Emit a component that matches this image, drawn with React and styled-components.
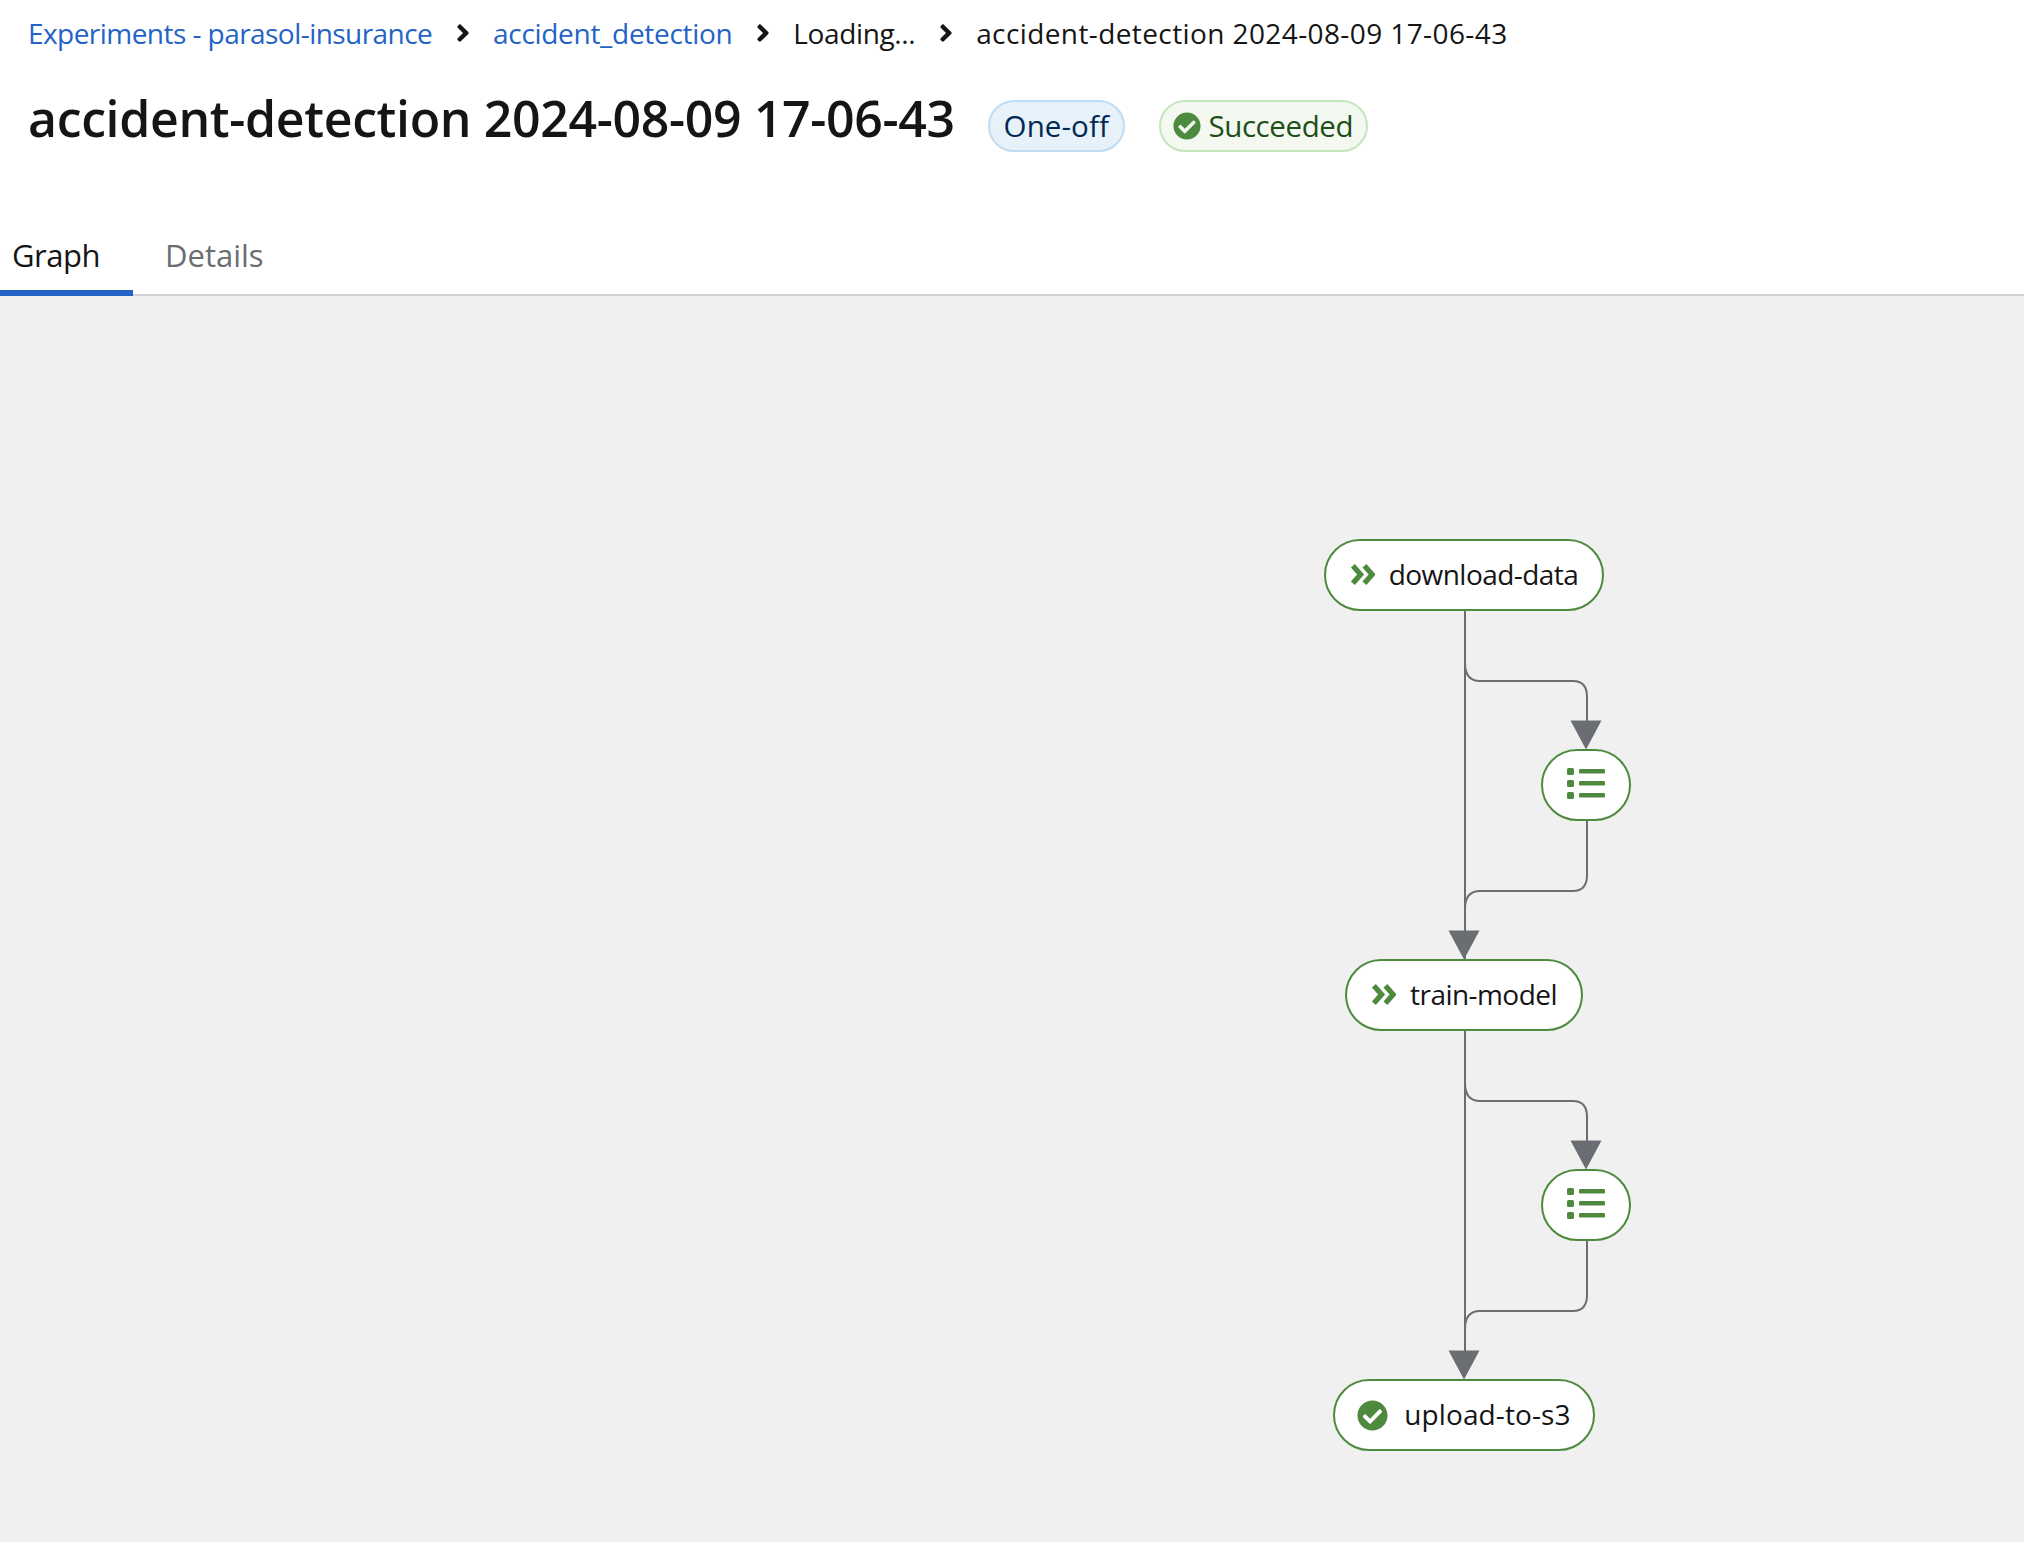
import React from 'react'
import styled, { createGlobalStyle } from 'styled-components'
import { FaCheckCircle, FaAngleRight } from 'react-icons/fa'

const runTitle = 'accident-detection 2024-08-09 17-06-43'

const GlobalStyle = createGlobalStyle`
  html, body {
    margin: 0;
    padding: 0;
    background: #fff;
  }
  body {
    font-family: "Open Sans", "Liberation Sans", sans-serif;
    color: #151515;
    overflow: hidden;
  }
`

const Page = styled.div`
  width: 2024px;
  height: 1542px;
  display: flex;
  flex-direction: column;
`

const Header = styled.header`
  padding: 13px 28px 0;
  height: 214px;
  box-sizing: border-box;
`

const Breadcrumbs = styled.nav`
  display: flex;
  align-items: center;
  height: 40px;
  font-size: 28px;
`

const Crumb = styled.a`
  color: ${(p) => (p.$link ? '#2463c6' : '#151515')};
  letter-spacing: ${(p) => p.$tracking}px;
  white-space: nowrap;
`

const Chevron = styled(FaAngleRight)`
  width: 14px;
  height: 28px;
  margin: 0 23.4px;
  color: #151515;
`

const TitleRow = styled.div`
  display: flex;
  align-items: center;
  margin-top: 33px;
  height: 64px;
`

const Title = styled.h1`
  margin: 0 33px 0 0;
  font-size: 50px;
  font-weight: 600;
  letter-spacing: -0.35px;
  white-space: nowrap;
  color: #151515;
`

const Badge = styled.span`
  display: inline-flex;
  align-items: center;
  justify-content: center;
  gap: 7px;
  box-sizing: border-box;
  height: 52px;
  width: ${(p) => p.$width}px;
  margin-right: 34px;
  margin-top: 16px;
  padding-bottom: 1px;
  border-radius: 26px;
  font-size: 29.5px;
  font-weight: 500;
  letter-spacing: ${(p) => p.$tracking}px;
  white-space: nowrap;
  border: 2px solid ${(p) => (p.$tone === 'green' ? '#c3e6bc' : '#bfdcf2')};
  background: ${(p) => (p.$tone === 'green' ? '#f3f9f1' : '#e7f1fa')};
  color: ${(p) => (p.$tone === 'green' ? '#1e4f18' : '#002952')};
`

const BadgeIcon = styled(FaCheckCircle)`
  width: 28px;
  height: 28px;
  color: #4e8a3d;
`

const Tabs = styled.div`
  display: flex;
  height: 82px;
  box-sizing: border-box;
  border-bottom: 2px solid #d2d2d2;
`

const Tab = styled.div`
  box-sizing: border-box;
  height: 82px;
  width: ${(p) => p.$width}px;
  padding: 6px 0 0 ${(p) => p.$pad}px;
  display: flex;
  align-items: center;
  font-size: 31px;
  letter-spacing: ${(p) => p.$tracking}px;
  color: ${(p) => (p.$active ? '#151515' : '#6a6e73')};
  border-bottom: 6px solid ${(p) => (p.$active ? '#2463c6' : 'transparent')};
`

const Canvas = styled.main`
  position: relative;
  flex: 1;
  background: #f0f0f0;
  overflow: hidden;
`

const Edges = styled.svg`
  position: absolute;
  left: 0;
  top: 0;
  width: 2024px;
  height: 1246px;
`

const Node = styled.div`
  position: absolute;
  left: ${(p) => p.$x}px;
  top: ${(p) => p.$y - 296}px;
  width: ${(p) => p.$w}px;
  height: 72px;
  box-sizing: border-box;
  padding-bottom: 2px;
  display: flex;
  align-items: center;
  justify-content: center;
  gap: 14px;
  background: #fff;
  border: 2px solid #4e8a3d;
  border-radius: 36px;
  font-size: 28px;
  color: #151515;
  white-space: nowrap;
`

const NodeLabel = styled.span`
  letter-spacing: ${(p) => p.$tracking}px;
`

const DoneIcon = styled(FaCheckCircle)`
  width: 31px;
  height: 31px;
  margin-top: 2px;
  margin-right: 2px;
  color: #4e8a3d;
`

const RunIcon = () => (
  <svg width="25" height="21" viewBox="0 0 26 21" fill="none" stroke="#4e8a3d" strokeWidth="5.5">
    <path d="M3 1.5 L11 10.5 L3 19.5" />
    <path d="M15 1.5 L23 10.5 L15 19.5" />
  </svg>
)

const ListIcon = () => (
  <svg width="38" height="32" viewBox="0 0 38 32" fill="#4e8a3d">
    <rect x="0" y="0" width="7" height="7" rx="1.5" />
    <rect x="0" y="12" width="7" height="7" rx="1.5" />
    <rect x="0" y="24" width="7" height="7" rx="1.5" />
    <rect x="12" y="1" width="26" height="4.5" rx="1" />
    <rect x="12" y="13" width="26" height="4.5" rx="1" />
    <rect x="12" y="25" width="26" height="4.5" rx="1" />
  </svg>
)

const edgePaths = [
  'M1465 610 V1355',
  'M1465 663 Q1465 681 1480 681 H1573 Q1587 681 1587 697 V725',
  'M1587 820 V875 Q1587 891 1573 891 H1480 Q1465 891 1465 909',
  'M1465 1083 Q1465 1101 1480 1101 H1573 Q1587 1101 1587 1117 V1145',
  'M1587 1240 V1295 Q1587 1311 1573 1311 H1480 Q1465 1311 1465 1329',
]

const arrowTips = [
  [1586, 749.5],
  [1464, 959.5],
  [1586, 1169.5],
  [1464, 1379.5],
]

const nodes = [
  { x: 1324, y: 539, w: 280, label: 'download-data', tracking: -0.55, icon: <RunIcon /> },
  { x: 1541, y: 749, w: 90, icon: <ListIcon /> },
  { x: 1345, y: 959, w: 238, label: 'train-model', tracking: -0.55, icon: <RunIcon /> },
  { x: 1541, y: 1169, w: 90, icon: <ListIcon /> },
  { x: 1333, y: 1379, w: 262, label: 'upload-to-s3', tracking: 0.1, icon: <DoneIcon /> },
]

export default function App() {
  return (
    <Page>
      <GlobalStyle />
      <Header>
        <Breadcrumbs>
          <Crumb $link $tracking={-0.55}>Experiments - parasol-insurance</Crumb>
          <Chevron />
          <Crumb $link $tracking={-0.3}>accident_detection</Crumb>
          <Chevron />
          <Crumb $tracking={-0.35}>Loading...</Crumb>
          <Chevron />
          <Crumb $tracking={0.4}>{runTitle}</Crumb>
        </Breadcrumbs>
        <TitleRow>
          <Title>{runTitle}</Title>
          <Badge $width={137} $tracking={0.1}>One-off</Badge>
          <Badge $width={209} $tracking={-0.4} $tone="green">
            <BadgeIcon />
            Succeeded
          </Badge>
        </TitleRow>
      </Header>
      <Tabs>
        <Tab $width={133} $pad={12} $tracking={-0.5} $active>Graph</Tab>
        <Tab $width={164} $pad={32} $tracking={0}>Details</Tab>
      </Tabs>
      <Canvas>
        <Edges viewBox="0 296 2024 1246">
          {edgePaths.map((d) => (
            <path key={d} d={d} fill="none" stroke="#6a6e73" strokeWidth="2" />
          ))}
          {arrowTips.map(([x, y]) => (
            <polygon key={y} points={`${x - 15.5},${y - 29} ${x + 15.5},${y - 29} ${x},${y}`} fill="#6a6e73" />
          ))}
        </Edges>
        {nodes.map((n) => (
          <Node key={n.y} $x={n.x} $y={n.y} $w={n.w}>
            {n.icon}
            {n.label && <NodeLabel $tracking={n.tracking}>{n.label}</NodeLabel>}
          </Node>
        ))}
      </Canvas>
    </Page>
  )
}
